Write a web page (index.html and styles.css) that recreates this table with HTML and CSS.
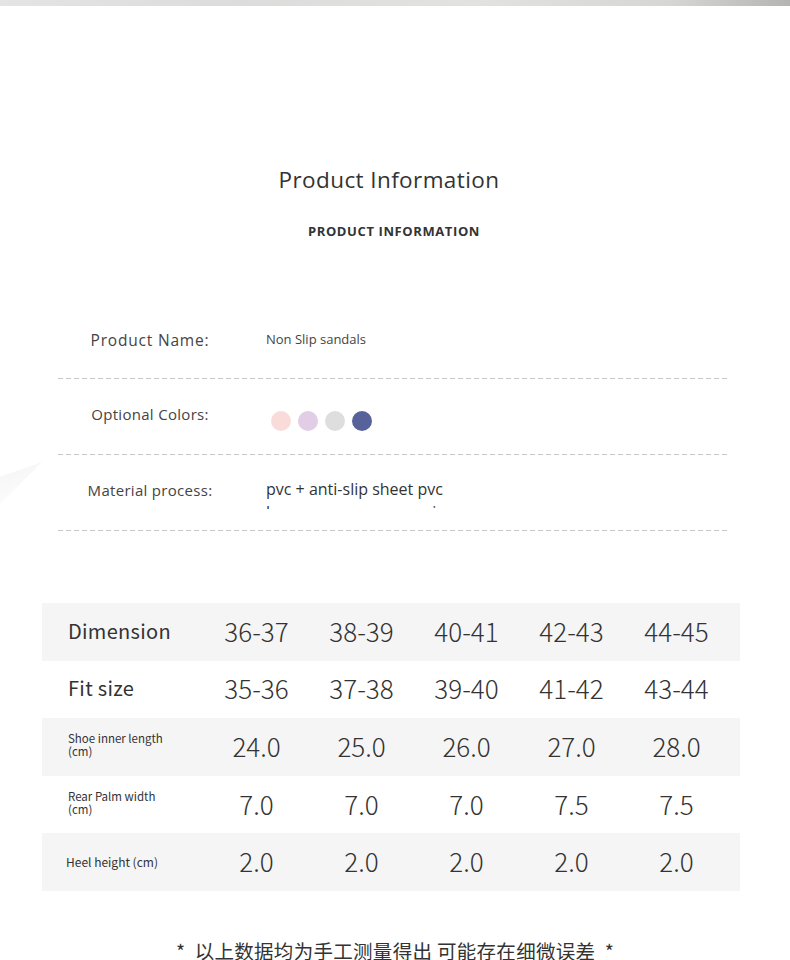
FILE: index.html
```html
<!DOCTYPE html>
<html lang="en">
<head>
<meta charset="utf-8">
<title>Product Information</title>
<link rel="stylesheet" href="styles.css">
</head>
<body>
<div class="page">
  <div class="topbar"></div>
  <div class="deco"></div>

  <header class="header">
    <h1 class="title">Product Information</h1>
    <p class="subtitle">PRODUCT INFORMATION</p>
  </header>

  <section class="info">
    <div class="info-row">
      <div class="info-label wide">Product Name:</div>
      <div class="info-value small">Non Slip sandals</div>
    </div>
    <div class="dash"></div>
    <div class="info-row">
      <div class="info-label">Optional Colors:</div>
      <div class="info-value swatches">
        <span class="swatch pink"></span>
        <span class="swatch lilac"></span>
        <span class="swatch grey"></span>
        <span class="swatch navy"></span>
      </div>
    </div>
    <div class="dash"></div>
    <div class="info-row">
      <div class="info-label">Material process:</div>
      <div class="info-value clipped">pvc + anti-slip sheet pvc<br>l&nbsp;&nbsp;&nbsp;&nbsp;&nbsp;&nbsp;&nbsp;&nbsp;&nbsp;&nbsp;&nbsp;&nbsp;&nbsp;&nbsp;&nbsp;&nbsp;&nbsp;&nbsp;&nbsp;&nbsp;&nbsp;&nbsp;&nbsp;&nbsp;&nbsp;&nbsp;&nbsp;&nbsp;&nbsp;&nbsp;&nbsp;&nbsp;&nbsp;&nbsp;&nbsp;&nbsp;&nbsp;&nbsp;&nbsp;i</div>
    </div>
    <div class="dash"></div>
  </section>

  <section class="size-table">
    <div class="trow shade">
      <div class="tlabel big">Dimension</div>
      <div class="tcell">36-37</div><div class="tcell">38-39</div><div class="tcell">40-41</div><div class="tcell">42-43</div><div class="tcell">44-45</div>
    </div>
    <div class="trow">
      <div class="tlabel big">Fit size</div>
      <div class="tcell">35-36</div><div class="tcell">37-38</div><div class="tcell">39-40</div><div class="tcell">41-42</div><div class="tcell">43-44</div>
    </div>
    <div class="trow shade">
      <div class="tlabel tiny"><span class="tl">Shoe inner length</span><span class="tl">(cm)</span></div>
      <div class="tcell">24.0</div><div class="tcell">25.0</div><div class="tcell">26.0</div><div class="tcell">27.0</div><div class="tcell">28.0</div>
    </div>
    <div class="trow">
      <div class="tlabel tiny"><span class="tl">Rear Palm width</span><span class="tl">(cm)</span></div>
      <div class="tcell">7.0</div><div class="tcell">7.0</div><div class="tcell">7.0</div><div class="tcell">7.5</div><div class="tcell">7.5</div>
    </div>
    <div class="trow shade">
      <div class="tlabel tiny heel">Heel height (cm)</div>
      <div class="tcell">2.0</div><div class="tcell">2.0</div><div class="tcell">2.0</div><div class="tcell">2.0</div><div class="tcell">2.0</div>
    </div>
  </section>

  <p class="note">*&nbsp;&nbsp;以上数据均为手工测量得出 可能存在细微误差&nbsp;&nbsp;*</p>
</div>
</body>
</html>
```

FILE: styles.css
```css
* { box-sizing: border-box; }

html, body {
  margin: 0;
  padding: 0;
  background: #ffffff;
}

.page {
  position: relative;
  width: 790px;
  font-family: "Noto Sans CJK SC", "Noto Sans", sans-serif;
  color: #333333;
}

.topbar {
  height: 6px;
  background: linear-gradient(90deg, #e4e4e4 0%, #dcdcdc 30%, #e2e2e0 60%, #d6d6d4 85%, #b4b4b2 100%);
}

.deco {
  position: absolute;
  left: 0;
  top: 462px;
  width: 42px;
  height: 42px;
  background: linear-gradient(160deg, rgba(238,238,238,0.6), rgba(250,250,250,0.3));
  clip-path: polygon(0 35%, 100% 0, 0 100%);
}

.header {
  text-align: center;
  padding-top: 159px;
}

.title {
  margin: 0;
  padding-right: 12px;
  font-family: "Open Sans", "Noto Sans", sans-serif;
  font-weight: 400;
  font-size: 22.5px;
  line-height: 30px;
  color: #333333;
  letter-spacing: 0.4px;
}

.subtitle {
  margin: 26px 0 0;
  padding-right: 2px;
  font-family: "Open Sans", "Noto Sans", sans-serif;
  font-weight: 700;
  font-size: 13px;
  line-height: 20px;
  color: #333333;
  letter-spacing: 0.6px;
}

.info {
  margin: 62px 63px 0 58px;
}

.info-row {
  display: grid;
  grid-template-columns: 184px 1fr;
  column-gap: 24px;
  align-items: center;
  height: 75px;
}

.info-label {
  text-align: center;
  font-family: "Open Sans", "Noto Sans", sans-serif;
  font-size: 15px;
  color: #444444;
  letter-spacing: 0.3px;
  margin-top: -5px;
}

.info-label.wide {
  font-size: 15.5px;
  letter-spacing: 0.8px;
  margin-top: -2px;
}

.info-value {
  font-family: "Open Sans", "Noto Sans", sans-serif;
  font-size: 16px;
  color: #333333;
}

.info-value.small {
  font-size: 13px;
  color: #444444;
  margin-top: -4px;
}

.info-value.clipped {
  height: 31px;
  line-height: 23px;
  overflow: hidden;
  margin-top: 2px;
  white-space: nowrap;
}

.swatches {
  display: flex;
  gap: 7px;
  margin-top: 8px;
  padding-left: 5px;
}

.swatch {
  width: 20px;
  height: 20px;
  border-radius: 50%;
}
.swatch.pink { background: #f9dcda; }
.swatch.lilac { background: #e1cde5; }
.swatch.grey { background: #dedede; }
.swatch.navy { background: #58629a; }

.dash {
  height: 1px;
  background: repeating-linear-gradient(90deg, #c8c8c8 0 5px, transparent 5px 8px);
}

.size-table {
  margin: 72px 50px 0 42px;
}

.trow {
  display: grid;
  grid-template-columns: 162px repeat(5, 105px);
  align-items: center;
  height: 57.6px;
}

.trow.shade {
  background: #f5f5f5;
}

.tlabel {
  padding-left: 26px;
  color: #333333;
}

.tlabel.big {
  font-size: 20px;
  letter-spacing: 0.3px;
  margin-top: -3px;
}

.tlabel.tiny {
  display: flex;
  flex-direction: column;
  font-size: 11.5px;
  margin-top: -4px;
}

.tl {
  display: block;
  height: 12.5px;
  line-height: 12.5px;
}

.tlabel.heel {
  display: block;
  padding-left: 24px;
  font-size: 12px;
  margin-top: -2px;
}

.tcell {
  text-align: center;
  font-size: 26px;
  font-weight: 300;
  color: #333333;
  margin-top: -3px;
}

.note {
  margin: 48px 0 0;
  text-align: center;
  font-size: 19.5px;
  line-height: 24px;
  color: #333333;
  letter-spacing: 0.3px;
}
```
